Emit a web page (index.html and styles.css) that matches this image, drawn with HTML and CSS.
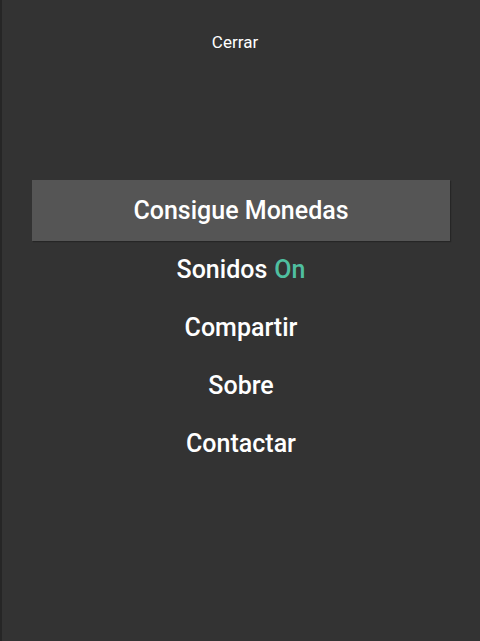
FILE: index.html
```html
<!DOCTYPE html>
<html lang="es">
<head>
<meta charset="utf-8">
<link rel="stylesheet" href="styles.css">
</head>
<body>
<div class="screen">
  <header class="top">
    <span class="close">Cerrar</span>
  </header>
  <nav class="menu">
    <div class="item active">Consigue Monedas</div>
    <div class="item">Sonidos <span class="on">On</span></div>
    <div class="item">Compartir</div>
    <div class="item">Sobre</div>
    <div class="item">Contactar</div>
  </nav>
</div>
</body>
</html>
```
FILE: styles.css
```css
html, body {
  margin: 0;
  padding: 0;
  height: 100%;
  background: #333333;
}
.screen {
  height: 641px;
  box-sizing: border-box;
  border-left: 2px solid #262626;
  font-family: Roboto, "Noto Sans", sans-serif;
  color: #ffffff;
  overflow: hidden;
}
.top {
  height: 84px;
  display: flex;
  align-items: center;
  justify-content: center;
  padding-right: 12px;
}
.close {
  font-size: 17px;
  line-height: 20px;
}
.menu {
  margin: 96px 30px 0 30px;
  display: flex;
  flex-direction: column;
}
.item {
  height: 58px;
  display: flex;
  align-items: center;
  justify-content: center;
  font-size: 25px;
  font-weight: 500;
}
.item.active {
  height: 61px;
  margin-bottom: -1px;
  background: #555555;
  box-shadow: 1px 1px 1px rgba(0,0,0,0.25);
}
.on {
  color: #4fbfa0;
  margin-left: 7px;
}
```
